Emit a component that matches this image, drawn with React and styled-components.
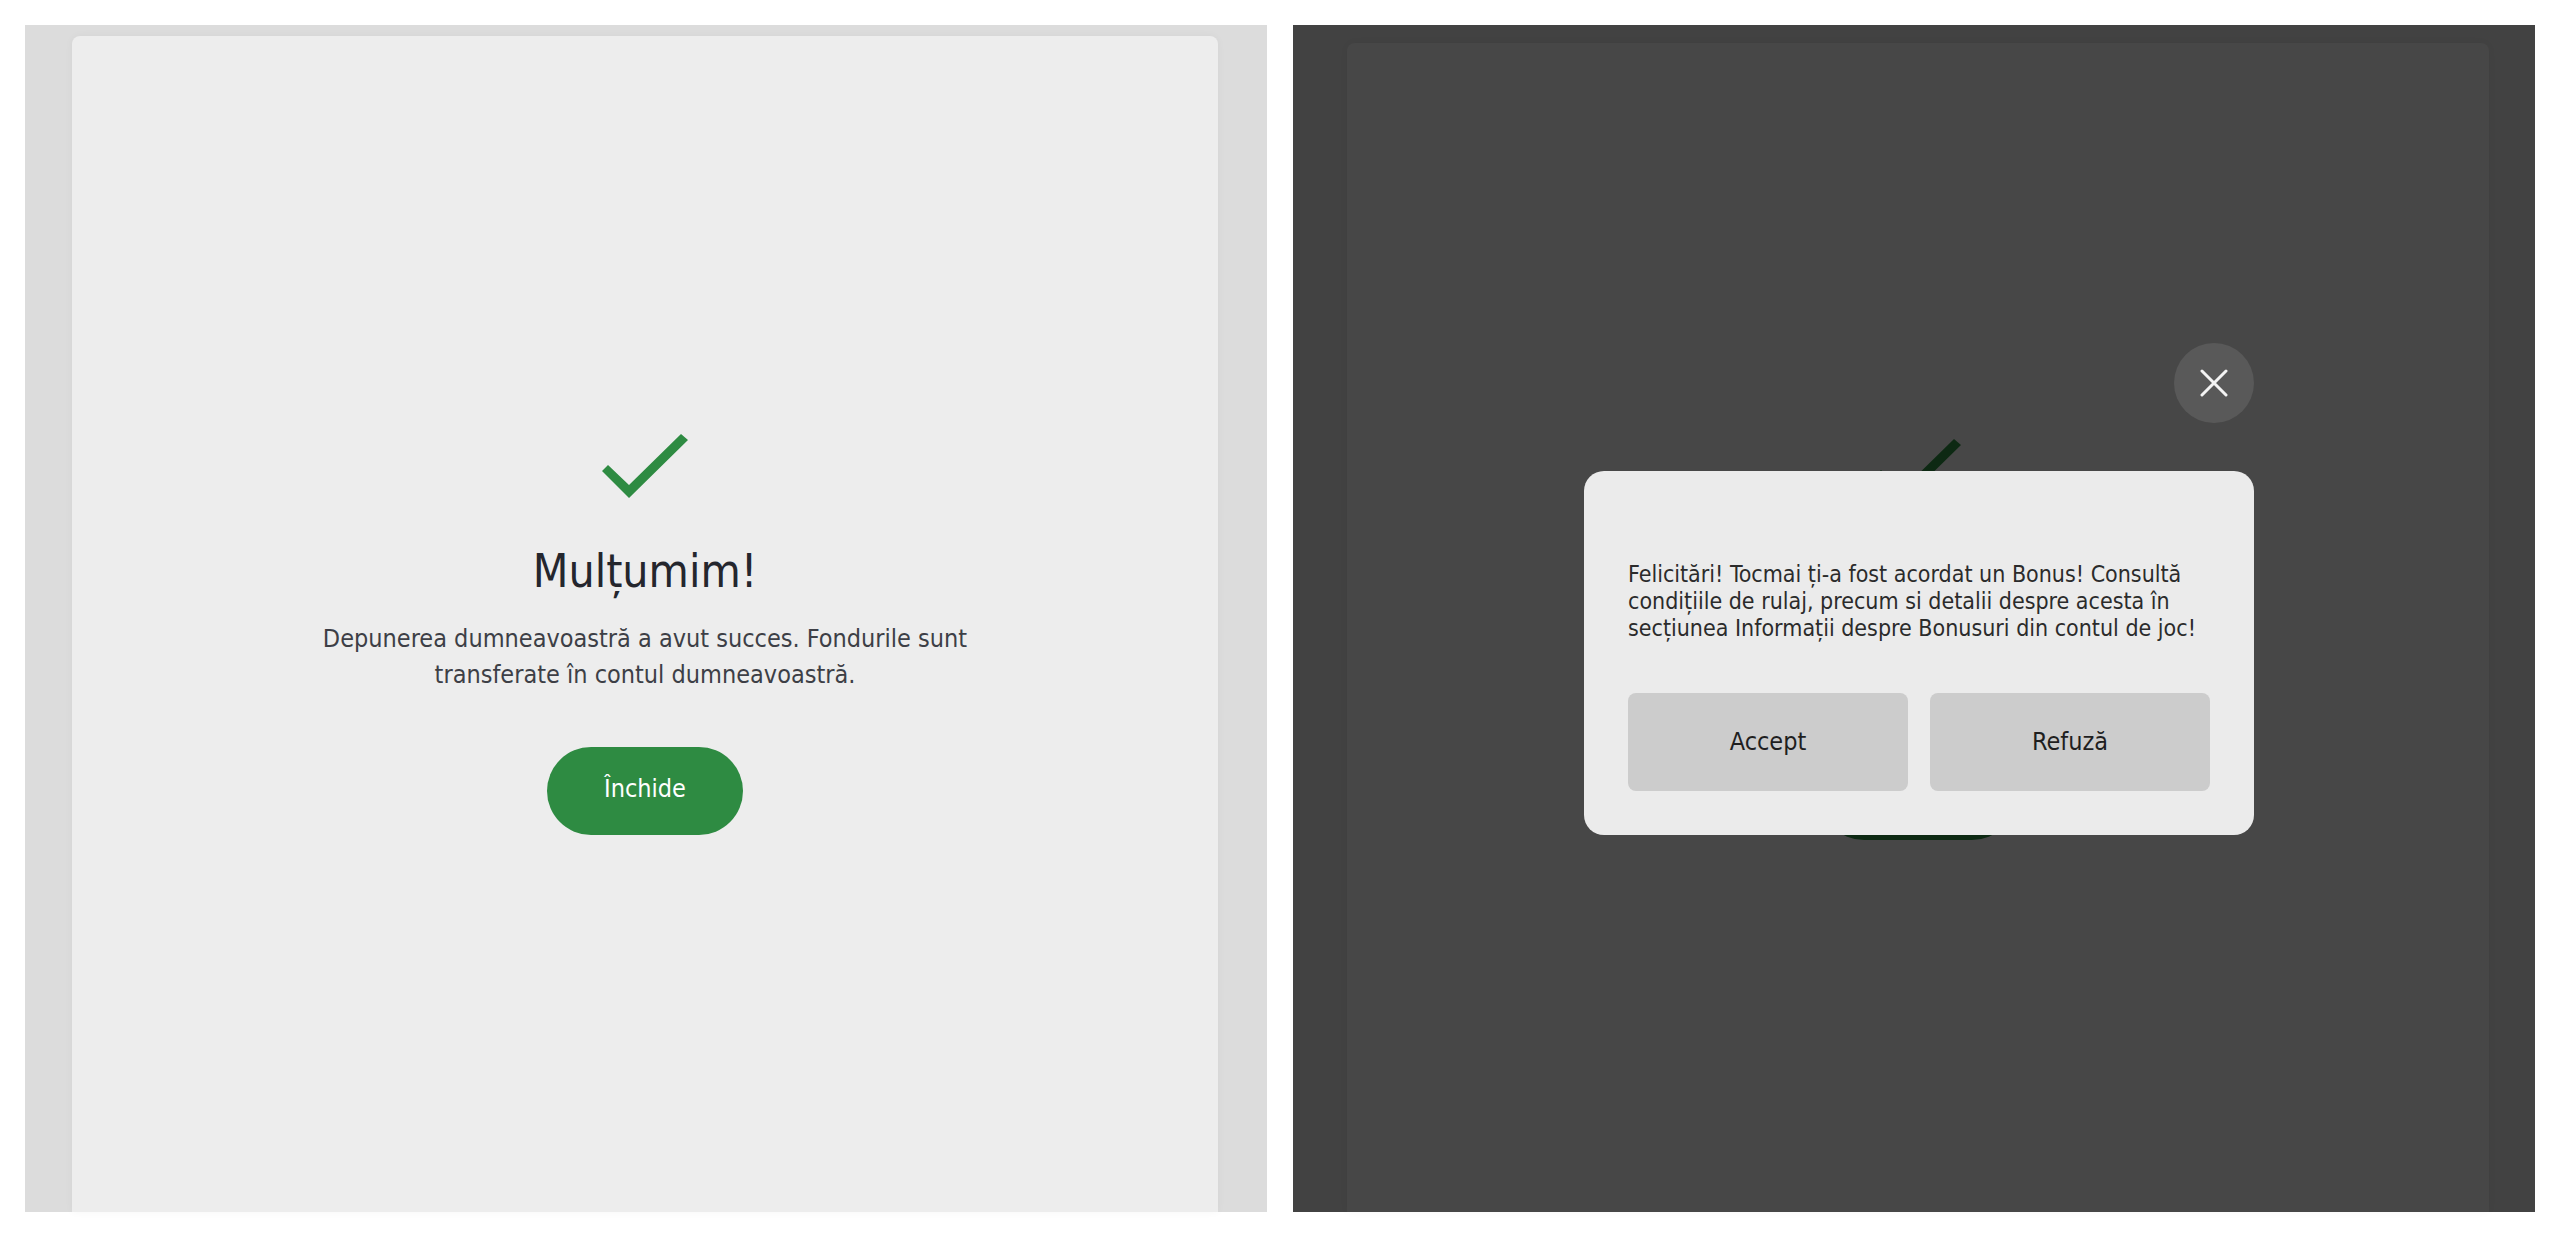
import React, { useState } from 'react';
import styled, { createGlobalStyle } from 'styled-components';

const GlobalStyle = createGlobalStyle`
  *{
    box-sizing: border-box;
  }
  body{
    margin: 0;
    background-color: #ffffff;
    font-family: 'DejaVu Sans Condensed', 'DejaVu Sans', sans-serif;
  }
  button{
    border: none;
    font-family: inherit;
    cursor: pointer;
  }
`;

const Page = styled.main`
  display: grid;
  grid-template-columns: 1fr 1fr;
  gap: 26px;
  min-height: 100vh;
  padding: 25px 25px 26px;
`;

const Screen = styled.section`
  position: relative;
  display: flex;
  padding: ${props => (props.$covered ? '18px 46px 0 54px' : '11px 49px 0 47px')};
  background-color: #dcdcdc;
`;

const Card = styled.div`
  flex: 1;
  display: flex;
  flex-direction: column;
  align-items: center;
  justify-content: center;
  padding: ${props => (props.$covered ? '24px' : '20px')} 24px 0;
  border-radius: 8px 8px 0 0;
  background-color: #ededed;
  box-shadow: 0 0 8px rgba(0, 0, 0, 0.04);
`;

const CheckIcon = styled.svg`
  width: 86px;
  height: 64px;
  fill: #2e8b42;
`;

const Title = styled.h1`
  margin: 44px 0 21px;
  font-size: 46px;
  font-weight: 400;
  line-height: 58px;
  color: #24262d;
  visibility: ${props => (props.$hidden ? 'hidden' : 'visible')};
`;

const Message = styled.p`
  max-width: 680px;
  margin: 0 0 54px;
  font-size: 25px;
  line-height: 36px;
  text-align: center;
  color: #3d3f46;
  visibility: ${props => (props.$hidden ? 'hidden' : 'visible')};
`;

const CloseButton = styled.button`
  height: 88px;
  padding: 0 57px 4px;
  border-radius: 44px;
  background-color: #2e8b42;
  font-size: 25px;
  color: #ffffff;
`;

const Overlay = styled.div`
  position: absolute;
  inset: 0;
  display: flex;
  flex-direction: column;
  align-items: center;
  justify-content: center;
  padding: 0 0 60px 10px;
  background-color: rgba(0, 0, 0, 0.7);
`;

const Dialog = styled.div`
  display: flex;
  flex-direction: column;
  align-items: flex-end;
  gap: 48px;
  width: 670px;
  max-width: 100%;
`;

const RoundButton = styled.button`
  display: flex;
  align-items: center;
  justify-content: center;
  width: 80px;
  height: 80px;
  padding: 0;
  border-radius: 50%;
  background-color: #595959;

  svg{
    width: 28px;
    height: 28px;
    stroke: #f4f4f4;
    stroke-width: 3;
    stroke-linecap: round;
  }
`;

const DialogBody = styled.div`
  width: 100%;
  padding: 90px 44px 44px;
  border-radius: 20px;
  background-color: #ebebeb;
`;

const DialogText = styled.p`
  margin: 0 0 51px;
  font-size: 23px;
  line-height: 27px;
  color: #2b2b2b;
`;

const Actions = styled.div`
  display: grid;
  grid-template-columns: 1fr 1fr;
  gap: 22px;
`;

const ActionButton = styled.button`
  height: 98px;
  border-radius: 8px;
  background-color: #cccccc;
  font-size: 25px;
  color: #1f1f1f;
`;

function DepositResult({ covered }) {
  return (
    <Card $covered={covered}>
      <CheckIcon viewBox="0 0 86 64" aria-hidden="true">
        <path d="M79 0 L86 6 L27 64 L0 37 L6 31 L27 51 Z" />
      </CheckIcon>
      <Title $hidden={covered}>Mulțumim!</Title>
      <Message $hidden={covered}>
        Depunerea dumneavoastră a avut succes. Fondurile sunt transferate în contul dumneavoastră.
      </Message>
      <CloseButton type="button" disabled={covered}>Închide</CloseButton>
    </Card>
  );
}

function BonusDialog({ onClose }) {
  return (
    <Overlay>
      <Dialog role="dialog" aria-modal="true" aria-describedby="bonus-text">
        <RoundButton type="button" aria-label="Închide" onClick={onClose}>
          <svg viewBox="0 0 28 28" aria-hidden="true">
            <path d="M2 2 L26 26 M26 2 L2 26" />
          </svg>
        </RoundButton>
        <DialogBody>
          <DialogText id="bonus-text">
            Felicitări! Tocmai ți-a fost acordat un Bonus! Consultă condițiile de rulaj, precum si
            detalii despre acesta în secțiunea Informații despre Bonusuri din contul de joc!
          </DialogText>
          <Actions>
            <ActionButton type="button" onClick={onClose}>Accept</ActionButton>
            <ActionButton type="button" onClick={onClose}>Refuză</ActionButton>
          </Actions>
        </DialogBody>
      </Dialog>
    </Overlay>
  );
}

function App() {
  const [open, setOpen] = useState(true);

  return (
    <>
      <GlobalStyle />
      <Page>
        <Screen>
          <DepositResult />
        </Screen>
        <Screen $covered>
          <DepositResult covered={open} />
          {open && <BonusDialog onClose={() => setOpen(false)} />}
        </Screen>
      </Page>
    </>
  );
}
export default App;
